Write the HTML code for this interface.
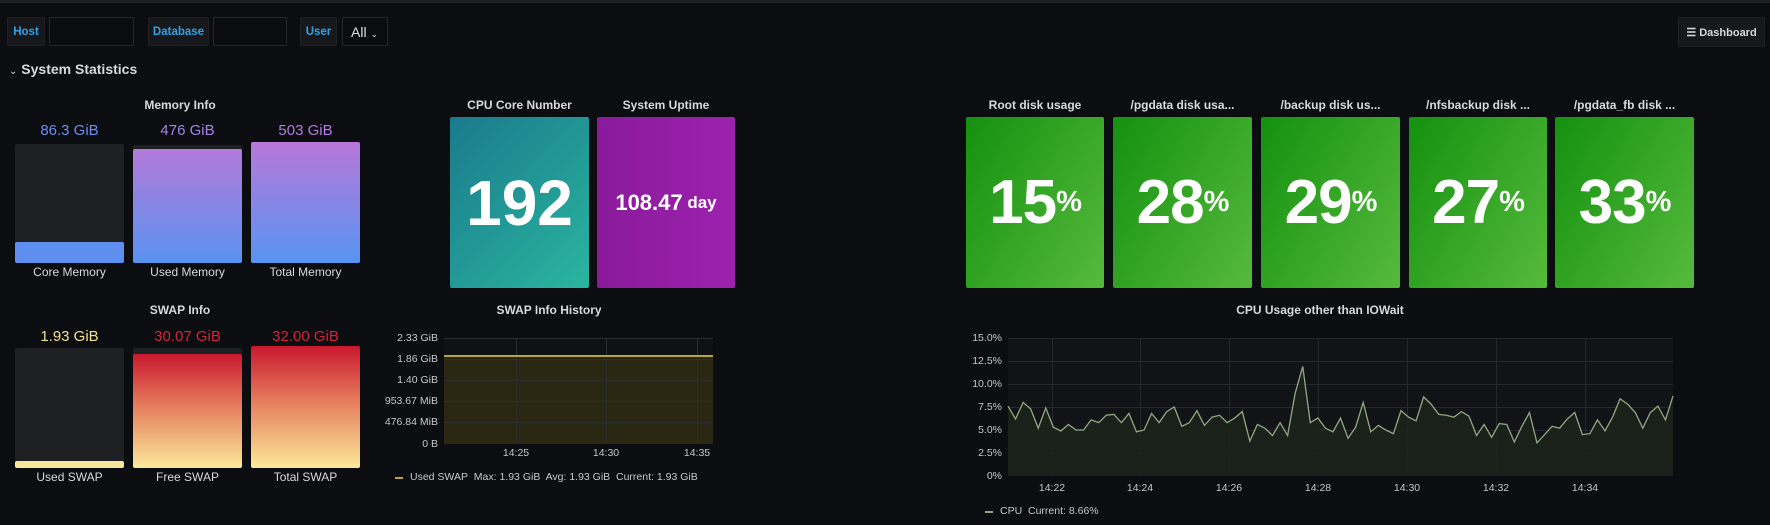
<!DOCTYPE html>
<html><head><meta charset="utf-8"><style>
*{margin:0;padding:0;box-sizing:border-box}
body{width:1770px;height:525px;background:#0c0d10;font-family:"Liberation Sans",sans-serif;color:#d8d9da;position:relative;overflow:hidden}
.a{position:absolute}
.lbl{background:#16181c;color:#33a2e5;font-size:11.5px;font-weight:bold;display:flex;align-items:center;justify-content:center;border:1px solid #1e2024;border-radius:2px}
.val{background:#0b0c0e;border:1px solid #25272b;border-radius:2px}
.t{font-size:12px;font-weight:bold;color:#d8d9da;text-align:center;white-space:nowrap}
.bar{border-radius:2px}
.stat{border-radius:2px;display:flex;align-items:center;justify-content:center;color:#fff;font-weight:bold}
.disk{background:linear-gradient(120deg,#14910f,#56ba3c)}
.big{font-size:62px;letter-spacing:-1px}
.big span{font-size:29px}
.ax{font-size:10.5px;color:#c7c8ca;white-space:nowrap}
.bl{font-size:12px}
</style></head><body>
<div class="a" style="left:0;top:0;width:1770px;height:3px;background:#1e1f22"></div>
<div class="a lbl" style="left:7px;top:17px;width:38px;height:29px">Host</div>
<div class="a val" style="left:49px;top:17px;width:85px;height:29px"></div>
<div class="a lbl" style="left:148px;top:17px;width:61px;height:29px">Database</div>
<div class="a val" style="left:213px;top:17px;width:74px;height:29px"></div>
<div class="a lbl" style="left:300px;top:17px;width:37px;height:29px">User</div>
<div class="a val" style="left:342px;top:17px;width:46px;height:29px;color:#e0e0e0;font-size:14px;padding:6px 8px">All <span style="font-size:9px">&#8964;</span></div>
<div class="a lbl" style="left:1678px;top:17px;width:87px;height:30px;color:#d8d9da;font-size:11px">&#9776;&nbsp;Dashboard</div>
<div class="a" style="left:9px;top:61px;font-size:14px;font-weight:bold;color:#d8d9da"><span style="font-size:10px;font-weight:normal">&#8964;</span> System Statistics</div>

<div class="a t" style="left:130px;top:98px;width:100px">Memory Info</div>
<div class="a" style="left:15px;top:122px;width:109px;text-align:center;font-size:15px;color:#6d8ff0">86.3 GiB</div>
<div class="a" style="left:133px;top:122px;width:109px;text-align:center;font-size:15px;color:#a483e6">476 GiB</div>
<div class="a" style="left:251px;top:122px;width:109px;text-align:center;font-size:15px;color:#b47ce0">503 GiB</div>
<div class="a bar" style="left:15px;top:144px;width:109px;height:119px;background:#1f2023"></div>
<div class="a bar" style="left:15px;top:242px;width:109px;height:21px;background:#5e8fee"></div>
<div class="a bar" style="left:133px;top:145px;width:109px;height:118px;background:#1f2023"></div>
<div class="a bar" style="left:133px;top:149px;width:109px;height:114px;background:linear-gradient(#b27ad9,#5a92f0)"></div>
<div class="a bar" style="left:251px;top:142px;width:109px;height:121px;background:linear-gradient(#b877d9,#5794f2)"></div>
<div class="a bl" style="left:15px;top:265px;width:109px;text-align:center">Core Memory</div>
<div class="a bl" style="left:133px;top:265px;width:109px;text-align:center">Used Memory</div>
<div class="a bl" style="left:251px;top:265px;width:109px;text-align:center">Total Memory</div>

<div class="a t" style="left:450px;top:98px;width:139px">CPU Core Number</div>
<div class="a t" style="left:597px;top:98px;width:138px">System Uptime</div>
<div class="a stat" style="left:450px;top:117px;width:139px;height:171px;background:linear-gradient(135deg,#1a7a8c,#2ab59f);font-size:64px">192</div>
<div class="a stat" style="left:597px;top:117px;width:138px;height:171px;background:linear-gradient(90deg,#8a1a9b,#9c22ae);font-size:22px">108.47<span style="font-size:17px">&nbsp;day</span></div>

<div class="a t" style="left:966px;top:98px;width:138px">Root disk usage</div>
<div class="a t" style="left:1113px;top:98px;width:139px">/pgdata disk usa...</div>
<div class="a t" style="left:1261px;top:98px;width:139px">/backup disk us...</div>
<div class="a t" style="left:1409px;top:98px;width:138px">/nfsbackup disk ...</div>
<div class="a t" style="left:1555px;top:98px;width:139px">/pgdata_fb disk ...</div>
<div class="a stat disk big" style="left:966px;top:117px;width:138px;height:171px">15<span>%</span></div>
<div class="a stat disk big" style="left:1113px;top:117px;width:139px;height:171px">28<span>%</span></div>
<div class="a stat disk big" style="left:1261px;top:117px;width:139px;height:171px">29<span>%</span></div>
<div class="a stat disk big" style="left:1409px;top:117px;width:138px;height:171px">27<span>%</span></div>
<div class="a stat disk big" style="left:1555px;top:117px;width:139px;height:171px">33<span>%</span></div>

<div class="a t" style="left:130px;top:303px;width:100px">SWAP Info</div>
<div class="a" style="left:15px;top:328px;width:109px;text-align:center;font-size:15px;color:#f2e28c">1.93 GiB</div>
<div class="a" style="left:133px;top:328px;width:109px;text-align:center;font-size:15px;color:#d3263a">30.07 GiB</div>
<div class="a" style="left:251px;top:328px;width:109px;text-align:center;font-size:15px;color:#d3263a">32.00 GiB</div>
<div class="a bar" style="left:15px;top:348px;width:109px;height:120px;background:#1f2023"></div>
<div class="a bar" style="left:15px;top:461px;width:109px;height:7px;background:#f8e79a"></div>
<div class="a bar" style="left:133px;top:348px;width:109px;height:120px;background:#1f2023"></div>
<div class="a bar" style="left:133px;top:354px;width:109px;height:114px;background:linear-gradient(#c8182e,#e57c5c 45%,#fbe99a)"></div>
<div class="a bar" style="left:251px;top:346px;width:109px;height:122px;background:linear-gradient(#c8182e,#e57c5c 45%,#fbe99a)"></div>
<div class="a bl" style="left:15px;top:470px;width:109px;text-align:center">Used SWAP</div>
<div class="a bl" style="left:133px;top:470px;width:109px;text-align:center">Free SWAP</div>
<div class="a bl" style="left:251px;top:470px;width:109px;text-align:center">Total SWAP</div>

<div class="a t" style="left:480px;top:303px;width:138px">SWAP Info History</div>
<svg class="a" style="left:0;top:0" width="1770" height="525">
<rect x="444" y="338" width="269" height="106" fill="#101113"/>
<rect x="444" y="356" width="269" height="88" fill="#2a2713"/>
<g stroke="#2c2d30" stroke-width="1">
<line x1="444" y1="338.5" x2="713" y2="338.5"/><line x1="444" y1="359.5" x2="713" y2="359.5"/><line x1="444" y1="380.5" x2="713" y2="380.5"/><line x1="444" y1="401.5" x2="713" y2="401.5"/><line x1="444" y1="422.5" x2="713" y2="422.5"/>
<line x1="516.5" y1="338" x2="516.5" y2="444"/><line x1="606.5" y1="338" x2="606.5" y2="444"/><line x1="697.5" y1="338" x2="697.5" y2="444"/>
</g>
<line x1="444" y1="356" x2="713" y2="356" stroke="#b8a446" stroke-width="2"/>
<line x1="395" y1="478" x2="403" y2="478" stroke="#b8a446" stroke-width="2"/>
<rect x="1008" y="338" width="665" height="138" fill="#121316"/>
<g stroke="#26282b" stroke-width="1">
<line x1="1008" y1="338.5" x2="1673" y2="338.5"/><line x1="1008" y1="361.5" x2="1673" y2="361.5"/><line x1="1008" y1="384.5" x2="1673" y2="384.5"/><line x1="1008" y1="407.5" x2="1673" y2="407.5"/><line x1="1008" y1="430.5" x2="1673" y2="430.5"/><line x1="1008" y1="453.5" x2="1673" y2="453.5"/>
<line x1="1052.5" y1="338" x2="1052.5" y2="476"/><line x1="1140.5" y1="338" x2="1140.5" y2="476"/><line x1="1229.5" y1="338" x2="1229.5" y2="476"/><line x1="1318.5" y1="338" x2="1318.5" y2="476"/><line x1="1407.5" y1="338" x2="1407.5" y2="476"/><line x1="1496.5" y1="338" x2="1496.5" y2="476"/><line x1="1585.5" y1="338" x2="1585.5" y2="476"/>
</g>
<g transform="translate(1008,476) scale(7.557,-9.2)">
<polygon fill="#1c231b" fill-opacity="0.9" points="0,0 0,7.6 1,6.2 2,8.0 3,7.3 4,5.2 5,7.4 6,5.3 7,4.9 8,5.6 9,5.0 10,5.0 11,6.1 12,5.8 13,6.6 14,6.7 15,5.8 16,6.8 17,4.8 18,5.0 19,6.8 20,5.8 21,7.0 22,7.5 23,5.4 24,5.8 25,7.1 26,5.5 27,6.4 28,6.6 29,5.8 30,6.3 31,7.0 32,3.8 33,5.6 34,5.2 35,4.4 36,5.8 37,4.4 38,9.0 39,11.9 40,5.8 41,6.3 42,5.2 43,4.8 44,6.3 45,4.1 46,5.3 47,8.0 48,4.8 49,5.5 50,5.0 51,4.6 52,7.1 53,6.4 54,6.0 55,8.6 56,7.8 57,6.7 58,6.6 59,6.4 60,7.0 61,6.5 62,4.4 63,5.6 64,4.2 65,5.7 66,5.6 67,3.7 68,5.4 69,6.9 70,3.6 71,4.5 72,5.4 73,5.2 74,6.2 75,6.9 76,4.5 77,4.6 78,6.1 79,4.9 80,6.4 81,8.4 82,7.8 83,6.9 84,5.2 85,6.9 86,7.6 87,6.1 88,8.7 88,0"/>
<polyline fill="none" stroke="#8fa882" stroke-width="1.3" vector-effect="non-scaling-stroke" points="0,7.6 1,6.2 2,8.0 3,7.3 4,5.2 5,7.4 6,5.3 7,4.9 8,5.6 9,5.0 10,5.0 11,6.1 12,5.8 13,6.6 14,6.7 15,5.8 16,6.8 17,4.8 18,5.0 19,6.8 20,5.8 21,7.0 22,7.5 23,5.4 24,5.8 25,7.1 26,5.5 27,6.4 28,6.6 29,5.8 30,6.3 31,7.0 32,3.8 33,5.6 34,5.2 35,4.4 36,5.8 37,4.4 38,9.0 39,11.9 40,5.8 41,6.3 42,5.2 43,4.8 44,6.3 45,4.1 46,5.3 47,8.0 48,4.8 49,5.5 50,5.0 51,4.6 52,7.1 53,6.4 54,6.0 55,8.6 56,7.8 57,6.7 58,6.6 59,6.4 60,7.0 61,6.5 62,4.4 63,5.6 64,4.2 65,5.7 66,5.6 67,3.7 68,5.4 69,6.9 70,3.6 71,4.5 72,5.4 73,5.2 74,6.2 75,6.9 76,4.5 77,4.6 78,6.1 79,4.9 80,6.4 81,8.4 82,7.8 83,6.9 84,5.2 85,6.9 86,7.6 87,6.1 88,8.7"/>
</g>
<line x1="985" y1="512" x2="993" y2="512" stroke="#8fa882" stroke-width="2"/>
</svg>
<div class="a ax" style="left:380px;top:331px;width:58px;text-align:right;line-height:14px">2.33 GiB</div>
<div class="a ax" style="left:380px;top:352px;width:58px;text-align:right;line-height:14px">1.86 GiB</div>
<div class="a ax" style="left:380px;top:373px;width:58px;text-align:right;line-height:14px">1.40 GiB</div>
<div class="a ax" style="left:370px;top:394px;width:68px;text-align:right;line-height:14px">953.67 MiB</div>
<div class="a ax" style="left:370px;top:415px;width:68px;text-align:right;line-height:14px">476.84 MiB</div>
<div class="a ax" style="left:380px;top:437px;width:58px;text-align:right;line-height:14px">0 B</div>
<div class="a ax" style="left:496px;top:447px;width:40px;text-align:center">14:25</div>
<div class="a ax" style="left:586px;top:447px;width:40px;text-align:center">14:30</div>
<div class="a ax" style="left:677px;top:447px;width:40px;text-align:center">14:35</div>
<div class="a ax" style="left:410px;top:471px">Used SWAP&nbsp; Max: 1.93 GiB&nbsp; Avg: 1.93 GiB&nbsp; Current: 1.93 GiB</div>

<div class="a t" style="left:1220px;top:303px;width:200px">CPU Usage other than IOWait</div>
<div class="a ax" style="left:950px;top:331px;width:52px;text-align:right;line-height:14px">15.0%</div>
<div class="a ax" style="left:950px;top:354px;width:52px;text-align:right;line-height:14px">12.5%</div>
<div class="a ax" style="left:950px;top:377px;width:52px;text-align:right;line-height:14px">10.0%</div>
<div class="a ax" style="left:950px;top:400px;width:52px;text-align:right;line-height:14px">7.5%</div>
<div class="a ax" style="left:950px;top:423px;width:52px;text-align:right;line-height:14px">5.0%</div>
<div class="a ax" style="left:950px;top:446px;width:52px;text-align:right;line-height:14px">2.5%</div>
<div class="a ax" style="left:950px;top:469px;width:52px;text-align:right;line-height:14px">0%</div>
<div class="a ax" style="left:1032px;top:482px;width:40px;text-align:center">14:22</div>
<div class="a ax" style="left:1120px;top:482px;width:40px;text-align:center">14:24</div>
<div class="a ax" style="left:1209px;top:482px;width:40px;text-align:center">14:26</div>
<div class="a ax" style="left:1298px;top:482px;width:40px;text-align:center">14:28</div>
<div class="a ax" style="left:1387px;top:482px;width:40px;text-align:center">14:30</div>
<div class="a ax" style="left:1476px;top:482px;width:40px;text-align:center">14:32</div>
<div class="a ax" style="left:1565px;top:482px;width:40px;text-align:center">14:34</div>
<div class="a ax" style="left:1000px;top:505px">CPU&nbsp; Current: 8.66%</div>
</body></html>
